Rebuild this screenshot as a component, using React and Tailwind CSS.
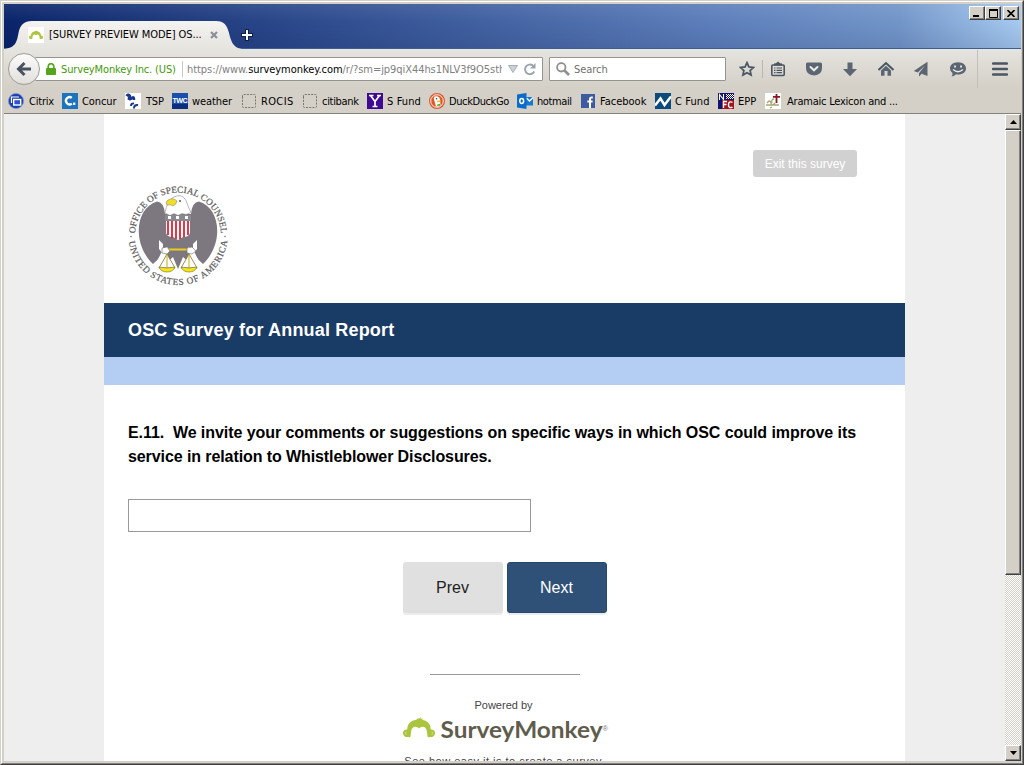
import React from "react";

const bookmarks = [
  { label: "Citrix", icon: "citrix", w: "w-[54px]", gap: "gap-[5px]", ls: "tracking-[-0.2px]" },
  { label: "Concur", icon: "concur", w: "w-[63px]", gap: "gap-[4px]", ls: "tracking-[-0.1px]" },
  { label: "TSP", icon: "tsp", w: "w-[47px]", gap: "gap-[5px]", ls: "tracking-[-0.2px]" },
  { label: "weather", icon: "twc", w: "w-[69px]", gap: "gap-[4px]", ls: "tracking-[-0.1px]" },
  { label: "ROCIS", icon: "blank", w: "w-[61px]", gap: "gap-[4px]", ls: "tracking-[0.35px]" },
  { label: "citibank", icon: "blank", w: "w-[65px]", gap: "gap-[4px]", ls: "tracking-[-0.3px]" },
  { label: "S Fund", icon: "yahoo", w: "w-[62px]", gap: "gap-[4px]", ls: "tracking-[0.1px]" },
  { label: "DuckDuckGo", icon: "duck", w: "w-[88px]", gap: "gap-[4px]", ls: "tracking-[-0.4px]" },
  { label: "hotmail", icon: "outlook", w: "w-[63px]", gap: "gap-[4px]", ls: "tracking-[-0.4px]" },
  { label: "Facebook", icon: "facebook", w: "w-[75px]", gap: "gap-[4px]", ls: "tracking-[0px]" },
  { label: "C Fund", icon: "chart", w: "w-[63px]", gap: "gap-[4px]", ls: "tracking-[0.1px]" },
  { label: "EPP", icon: "nfc", w: "w-[47px]", gap: "gap-[4px]", ls: "tracking-[0px]" },
  { label: "Aramaic Lexicon and ...", icon: "cross", w: "w-[140px]", gap: "gap-[6px]", ls: "tracking-[-0.22px]" },
];

const favicons = {
  citrix: (
    <>
      <circle cx="8" cy="8" r="7.6" fill="#1d3fae" stroke="#7d97dc" strokeWidth=".8" />
      <path d="M3.500 10V4H11" fill="none" stroke="#fff" strokeWidth="1.200" />
      <rect x="5.700" y="6.500" width="7" height="5.500" fill="#2d53c4" stroke="#fff" strokeWidth="1.400" />
    </>
  ),
  concur: (
    <>
      <rect width="16" height="16" fill="#1c74bc" />
      <path d="M9.800 4.900A3.600 3.600 0 1 0 9.800 10.600" fill="none" stroke="#fff" strokeWidth="2.300" />
      <rect x="11" y="9.600" width="2.300" height="2.300" fill="#fff" />
    </>
  ),
  tsp: (
    <>
      <rect width="16" height="16" fill="#fff" />
      <path d="M1.500 3Q3 1 4.500 2.500T3 5M3 5Q5 7 7 5T9 7" fill="none" stroke="#17388c" strokeWidth="2.600" />
      <path d="M6 13q0-3 3-2.500M9 15.500q0-4 4-3.500" fill="none" stroke="#17388c" strokeWidth="2" />
    </>
  ),
  twc: (
    <>
      <rect width="16" height="16" fill="#1b4fae" />
      <rect y="11" width="16" height="5" fill="#0c2f7c" />
      <text x="0.400" y="10" fontSize="7.200" fontWeight="700" fill="#fff" textLength="15.200" fontFamily="Liberation Sans, sans-serif">TWC</text>
    </>
  ),
  blank: <path d="M1.500 4V2.500q0-1 1-1h11q1 0 1 1v11q0 1-1 1h-11q-1 0-1-1z" fill="none" stroke="#77756f" strokeDasharray="2 1.200" />,
  yahoo: (
    <>
      <rect width="16" height="16" fill="#3d0a91" />
      <path d="M3.500 2.500l4.500 6v5M12.500 2.500L8 8.500M2 2.500h4.500M10 2.500h4M5.500 13.500h5" fill="none" stroke="#fff" strokeWidth="1.700" />
    </>
  ),
  duck: (
    <>
      <circle cx="8" cy="8" r="8" fill="#dc5a2c" />
      <circle cx="8" cy="8" r="6.300" fill="none" stroke="#fff" strokeWidth=".9" />
      <path d="M5.500 3.500q4.500-1 5.500 3l.5 6q-2 1.800-4.500.8L5 6.500Q4.500 4.500 5.500 3.500z" fill="#fff" />
      <circle cx="7.600" cy="5.800" r=".7" fill="#234" />
      <path d="M8 7.800l4-.6-1 1.800-3 .3z" fill="#f6c01c" />
      <path d="M8 11.500l3-.8v2.300l-3-.2z" fill="#5cb13c" />
    </>
  ),
  outlook: (
    <>
      <rect x="8" y="4" width="8" height="8.500" fill="#1479d2" />
      <path d="M9.500 5l3 3L16 4.500" fill="none" stroke="#fff" strokeWidth="1.300" />
      <path d="M0 1.500L9.500 0v16L0 14.500z" fill="#0a6cc8" />
      <ellipse cx="4.700" cy="8" rx="1.900" ry="2.500" fill="none" stroke="#fff" strokeWidth="1.500" />
    </>
  ),
  facebook: (
    <>
      <rect x="1" y="1" width="14" height="14" fill="#3f5ba0" />
      <path d="M12.800 4.500h-1.500q-1.300 0-1.300 1.500v9M7.300 8.500h5.300" fill="none" stroke="#fff" strokeWidth="2" />
    </>
  ),
  chart: (
    <>
      <rect width="16" height="16" fill="#0c4a7e" />
      <path d="M0 12.500l5.500-7 4 6.500L16 3.500" fill="none" stroke="#fff" strokeWidth="2.500" />
    </>
  ),
  nfc: (
    <>
      <rect width="16" height="16" fill="#12126e" />
      <rect x="4" y="7" width="12" height="9" fill="#a01420" />
      <path d="M8 1.500h7M9 2.500h7M8 3.500h7M9 4.500h7M8 5.500h7" stroke="#fff" strokeDasharray="1 1" />
      <path d="M1.500 7V1.500l4 5V1" fill="none" stroke="#fff" strokeWidth="1.100" />
      <path d="M5.500 15V8.500h3.500M5.500 11.500h3M14.500 9.300q-4-1.500-4 2.500t4 2.300" fill="none" stroke="#fff" strokeWidth="1.400" />
    </>
  ),
  cross: (
    <>
      <rect width="16" height="16" fill="#fff" />
      <path d="M2 10q3-4 4 0t4 0M1 12h13M7 14l-2 1M9 6q-3 0-2 4" fill="none" stroke="#a9a878" strokeWidth="1.300" />
      <path d="M11.500 1v9M8 3.800h7" stroke="#8c1622" strokeWidth="1.800" />
    </>
  ),
};

const Favicon = ({ name }) => (
  <svg className="block size-4 shrink-0" viewBox="0 0 16 16">{favicons[name]}</svg>
);

const Monkey = ({ className }) => (
  <svg className={className} viewBox="0 0 32 22">
    <path d="M4.200 12.500C4.500 6.500 8 3.500 13 3L15 1.200l1 .6L17.500 0v1.800L20 1.500 19 3c5 .5 8.500 3.500 8.800 9.500a3.800 3.800 0 1 1-1 7.300c-.5 1-2 .9-2.300-.5L24 15c-.5-3.500-2-5.200-4.300-5.200-1.700 0-2.700.7-3.700 1.700-1-1-2-1.700-3.700-1.700C10 9.800 8.500 11.500 8 15l-.5 4.300c-.3 1.400-1.800 1.500-2.300.5a3.800 3.800 0 1 1-1-7.300z" fill="#aac43b" />
    <path d="M3.200 14.700q-1.500 1.500 0 3M28.800 14.700q1.500 1.500 0 3" fill="none" stroke="#d8e4a0" strokeWidth=".9" />
  </svg>
);

const Tool = ({ children }) => (
  <svg className="block size-4 shrink-0" viewBox="0 0 16 16" fill="none" stroke="#4a5663" strokeWidth="1.800">{children}</svg>
);

const ClassicButton = ({ className, children }) => (
  <div className={"flex shrink-0 items-center justify-center border border-t-white border-l-white border-r-[#404040] border-b-[#404040] bg-[#d4d0c8] shadow-[inset_-1px_-1px_0_#808080] " + className}>{children}</div>
);

function TitleBar() {
  return (
    <div className="flex h-[45px] items-start justify-between border-b border-[#3a5f96] bg-[linear-gradient(180deg,#ffffff14,#ffffff00_40%,#00003018),linear-gradient(90deg,#0a246a,#5d7fbb_70%,#7295c8_88%,#a6caf0)]">
      <div className="relative mt-[17px] h-7 w-[238px]">
        <svg className="absolute inset-0 block h-7 w-[238px]" viewBox="0 0 238 28">
          <defs>
            <linearGradient id="tab" x2="0" y2="1"><stop stopColor="#f4f3f1" /><stop offset="1" stopColor="#e6e4df" /></linearGradient>
          </defs>
          <path d="M0 28C12 27 13 20 14.500 12 16 4 20 0 28 0H212C220 0 223 4 225 12 227 20 229 27 238 28z" fill="url(#tab)" />
        </svg>
        <div className="relative flex h-7 items-center pl-6">
          <div className="flex size-4 items-center justify-center bg-white"><Monkey className="block h-[10px] w-[14px]" /></div>
          <span className="ml-[5px] mt-px w-[154px] whitespace-nowrap text-[11px] tracking-[-0.07px] text-black">[SURVEY PREVIEW MODE] OS...</span>
          <svg className="ml-[7px] block size-2" viewBox="0 0 8 8"><path d="M1 1l6 6M7 1L1 7" stroke="#8a8f96" strokeWidth="2.200" /></svg>
        </div>
      </div>
      <svg className="-ml-px mt-[25px] block size-3" viewBox="0 0 12 12"><path d="M6 0v12M0 6h12" stroke="#0d2144" strokeWidth="4" /><path d="M6 1v10M1 6h10" stroke="#fff" strokeWidth="2" /></svg>
      <div className="ml-auto mr-[2px] mt-[2px] flex">
        <ClassicButton className="h-[14px] w-4"><svg className="block h-2 w-2" viewBox="0 0 8 8"><path d="M0 7h6" stroke="#000" strokeWidth="2" /></svg></ClassicButton>
        <ClassicButton className="h-[14px] w-4"><svg className="block h-[9px] w-[9px]" viewBox="0 0 9 9"><path d="M.5 0v8.500h8V0M0 1h9" fill="none" stroke="#000" /><path d="M0 1h9" stroke="#000" strokeWidth="2" /></svg></ClassicButton>
        <ClassicButton className="ml-[2px] h-[14px] w-4"><svg className="block h-[7px] w-2" viewBox="0 0 8 7"><path d="M.5 0l7 7M7.500 0l-7 7" stroke="#000" strokeWidth="1.600" /></svg></ClassicButton>
      </div>
    </div>
  );
}

function NavBar() {
  return (
    <div className="flex h-10 items-center pl-1">
      <div className="z-10 flex size-8 shrink-0 items-center justify-center rounded-full border border-[#9c9b98] bg-[linear-gradient(#fbfbfa,#e2e0dc)]">
        <svg className="block size-4" viewBox="0 0 16 16"><path d="M15 8H3M8.500 2L2.500 8l6 6" fill="none" stroke="#47525e" strokeWidth="3" /></svg>
      </div>
      <div className="-ml-[5px] flex h-6 w-[508px] shrink-0 items-center rounded-[1px] border border-[#96948f] bg-white pl-[10px] text-[11px]">
        <svg className="block h-3 w-[10px]" viewBox="0 0 10 12"><path d="M2.200 6V3.500a2.800 2.800 0 0 1 5.600 0V6" fill="none" stroke="#55a51c" strokeWidth="1.700" /><rect y="5" width="10" height="7" rx="1" fill="#55a51c" /></svg>
        <span className="ml-[5px] mt-[2px] w-[121px] whitespace-nowrap tracking-[-0.14px] text-[#429a05]">SurveyMonkey Inc. (US)</span>
        <span className="h-4 w-px bg-[#c9c8c0]" />
        <span className="ml-[4px] mt-[2px] w-[315px] overflow-hidden whitespace-nowrap tracking-[-0.06px] text-[#808080]">https://www.<span className="text-black">surveymonkey.com</span>/r/?sm=jp9qiX44hs1NLV3f9O5sth</span>
        <svg className="ml-[6px] block h-2 w-[10px]" viewBox="0 0 10 8"><path d="M.5 .5h9L5 7.500z" fill="#ccd2d8" stroke="#a6aeb6" /></svg>
        <svg className="ml-[6px] block size-3" viewBox="0 0 12 12"><path d="M10.200 8.500A4.800 4.800 0 1 1 9 2.700" fill="none" stroke="#98a3ad" strokeWidth="1.900" /><path d="M11.500 0v5.500H6z" fill="#98a3ad" /></svg>
      </div>
      <div className="ml-[6px] flex h-6 w-[177px] shrink-0 items-center rounded-[1px] border border-[#96948f] bg-white pl-[6px] text-[11px] text-[#6f6f6f]">
        <svg className="block size-[14px]" viewBox="0 0 14 14" fill="none" stroke="#8f8f8f"><circle cx="5.300" cy="5.300" r="4.200" strokeWidth="1.800" /><path d="M8.500 8.500l4.500 4.500" strokeWidth="2.600" /></svg>
        <span className="ml-[4px] mt-[2px] tracking-[-0.05px]">Search</span>
      </div>
      <div className="ml-[13px] flex items-center">
        <Tool><path d="M8 1.600l1.900 4.300 4.700.5-3.500 3.100 1 4.600L8 11.700l-4.100 2.400 1-4.600L1.400 6.400l4.700-.5z" strokeWidth="1.700" /></Tool>
        <span className="ml-[7px] mr-[7px] h-[18px] w-px bg-[#b8b6b0]" />
        <Tool><rect x="1.800" y="4" width="12.400" height="10.500" rx="1" strokeWidth="1.600" /><path d="M8 .5l2 1.700 2 .3v2H4v-2l2-.3z" fill="#4a5663" stroke="none" /><path d="M4 7h1.500M6.500 7H12M4 9.300h1.500M6.500 9.300H12M4 11.600h1.500M6.500 11.600H12" strokeWidth="1.200" /></Tool>
        <div className="ml-5"><Tool><path d="M1.500 1.500h13Q16 1.500 16 3v4q0 7-8 7.500Q0 14 0 7V3q0-1.500 1.500-1.500z" fill="#5b6672" stroke="none" /><path d="M4.500 6L8 9.300 11.500 6" stroke="#eceae6" strokeWidth="2" strokeLinecap="round" /></Tool></div>
        <div className="ml-5"><Tool><path d="M5.500 1.500h5V8H15l-7 7.200L1 8h4.500z" fill="#5b6672" stroke="none" /></Tool></div>
        <div className="ml-5"><Tool><path d="M.5 9L8 2l7.500 7" strokeWidth="2" /><path d="M3 9.500l5-4.700 5 4.700v5.200H9.500V10h-3v4.700H3z" fill="#5b6672" stroke="none" /></Tool></div>
        <div className="ml-[19px]"><Tool><path d="M14.500.8L.8 10l4 1.500L12 4.500 6 12.300v3.200l2.600-2.700L14.500 15z" fill="#5b6672" stroke="none" /></Tool></div>
        <div className="ml-[21px]"><Tool><path d="M8 1.200c5 0 8 2.800 8 6.200s-3 6-8 6q-1 0-2-.2Q4.500 15.300 1.500 15.500 2.800 14 2.500 12 0 10.300 0 7.400C0 4 3 1.200 8 1.200z" fill="#5b6672" stroke="none" /><path d="M5 4.500v2M11 4.500v2" stroke="#eceae6" strokeWidth="1.800" /><path d="M3 8.500q5 4.500 10 0" stroke="#eceae6" strokeWidth="1.300" /></Tool></div>
        <span className="ml-[11px] mr-[14px] h-[38px] w-px bg-[#c2bfb9]" />
        <svg className="block h-[14px] w-4" viewBox="0 0 16 14"><path d="M1 1.500h14M1 7h14M1 12.500h14" stroke="#4a5663" strokeWidth="2.400" strokeLinecap="round" /></svg>
      </div>
    </div>
  );
}

function Seal() {
  return (
    <svg className="block h-[104px] w-[102px] overflow-visible" viewBox="0 0 102 104">
      <defs>
        <path id="arcTop" d="M8 51.500A43 43 0 0 1 94 51.500" />
        <path id="arcBottom" d="M1.500 51.500A49.500 49.500 0 0 0 100.500 51.500" />
      </defs>
      <g fontFamily="Liberation Serif, serif" fontSize="9.200" fill="#5a5a5a" stroke="#5a5a5a" strokeWidth=".2">
        <text><textPath href="#arcTop" startOffset="2" textLength="131">OFFICE OF SPECIAL COUNSEL</textPath></text>
        <text><textPath href="#arcBottom" startOffset="6" textLength="144">UNITED STATES OF AMERICA</textPath></text>
      </g>
      <path d="M38 30Q37 18 30 17.500C8 24 5 60 26 80q5-4 8-9l5-8h24l5 8q3 5 8 9c21-20 18-56-4-62.500q-7 .5-8 12.500z" fill="#7d787f" />
      <path d="M38 29Q40 17 46 13.500q9-5 13 3 2 6 5 12l-5 2-4-1-4 2-4-2-4 2z" fill="#fff" stroke="#888" strokeWidth=".6" />
      <path d="M50 17q-4-4-9-1-3 2-1 5 4-1 6 1 3-1 4-5z" fill="#f1df26" stroke="#777" strokeWidth=".5" />
      <circle cx="53" cy="17" r=".9" fill="#444" />
      <path d="M39 37h24v12q-1 4-7 4l-5 3-5-3q-6 0-7-4z" fill="#fff" />
      <path d="M41 37v14M45 37v17M49 37v18M53 37v18M57 37v16M61 37v14" stroke="#e02336" strokeWidth="1.800" />
      <path d="M38 31h26v6H38z" fill="#8b8990" />
      <path d="M41 32h3v3h-3zM49 32h3v3h-3zM58 32h3v3h-3z" fill="#fff" />
      <path d="M42 58h18l5 23-9-8-5 12-5-12-9 8z" fill="#7d787f" />
      <path d="M28 82l7-15 4 8-5 12zM74 82l-7-15-4 8 5 12z" fill="#fff" />
      <path d="M32 56l4 4v4l4 2-4 4-4-5zM70 56l-4 4v4l-4 2 4 4 4-5z" fill="#fff" />
      <path d="M36 65.500h30" stroke="#eccc1c" strokeWidth="2" />
      <path d="M35 64l5-1 3 4-3 3-5-1zM60 64l5-1 4 4-4 3-5-1z" fill="#fff" stroke="#666" strokeWidth=".6" />
      <path d="M40 70l-8 14h16zM62 70l-8 14h16z" fill="#fff" stroke="#847028" strokeWidth=".8" />
      <path d="M32 83q8 2 16 0-2 5-8 5t-8-5zM54 83q8 2 16 0-2 5-8 5t-8-5z" fill="#f5e51b" stroke="#756b22" strokeWidth=".6" />
      <path d="M40 70v13M62 70v13" stroke="#c8a91a" />
      <circle cx="4" cy="52.500" r=".8" fill="#777" /><circle cx="98" cy="52.500" r=".8" fill="#777" />
    </svg>
  );
}

function SurveyPage() {
  return (
    <main className="ml-[100px] flex h-[647px] w-[801px] shrink-0 flex-col overflow-hidden bg-white font-['Liberation_Sans',Arial,sans-serif]">
      <div className="mr-12 mt-9 flex h-[27px] w-[104px] shrink-0 items-center justify-center self-end rounded-[3px] bg-[#d1d1d1] text-[12px] text-white"><span className="whitespace-nowrap">Exit this survey</span></div>
      <div className="ml-[23px] mt-[7px] h-[119px] shrink-0"><Seal /></div>
      <h1 className="flex h-[54px] shrink-0 items-center bg-[#193c67] pl-6 text-[18px] font-bold text-white"><span className="whitespace-nowrap tracking-[0.18px]">OSC Survey for Annual Report</span></h1>
      <div className="h-7 shrink-0 bg-[#b4cdf3]" />
      <h2 className="ml-6 mt-9 shrink-0 whitespace-nowrap text-[16px] font-bold leading-6 text-black">
        <span className="block w-fit tracking-[-0.065px]">E.11.&nbsp; We invite your comments or suggestions on specific ways in which OSC could improve its</span>
        <span className="block w-fit tracking-[-0.09px]">service in relation to Whistleblower Disclosures.</span>
      </h2>
      <div className="ml-6 mt-[30px] h-[33px] w-[403px] shrink-0 border border-[#999]" />
      <div className="mt-[30px] flex h-[51px] shrink-0 justify-center gap-1 text-[16px]">
        <div className="flex w-[100px] items-center justify-center rounded-[3px] bg-[#e0e0e0] text-[#222] shadow-[0_2px_0_#ececec]">Prev</div>
        <div className="flex w-[100px] items-center justify-center rounded-[3px] border border-[#26476f] bg-[#2f5177] text-white shadow-[0_2px_0_#ececec]">Next</div>
      </div>
      <div className="ml-[326px] mt-[61px] h-px w-[150px] shrink-0 bg-[#999]" />
      <div className="mt-[22px] flex h-4 shrink-0 items-center justify-center pr-[2px] text-[11px] text-[#444]">
        <span>Powered by</span>
      </div>
      <div className="ml-[299px] mt-[4px] flex h-7 shrink-0 items-start">
        <Monkey className="block h-[22px] w-8" />
        <svg className="ml-[6px] block h-7 w-[168px] overflow-visible" viewBox="0 0 168 28">
          <text x="-0.500" y="21" fontFamily="Lato, sans-serif" fontSize="22.500" fontWeight="700" fill="#5e5d4c" textLength="162" lengthAdjust="spacingAndGlyphs">SurveyMonkey</text>
          <text x="161.500" y="14" fontFamily="Liberation Sans, sans-serif" fontSize="7.500" fill="#777">®</text>
        </svg>
      </div>
      <div className="mt-[8px] shrink-0 whitespace-nowrap text-center text-[11px] leading-4 text-[#444]"><span className="tracking-[0.5px]">See how easy it is to create a survey.</span></div>
    </main>
  );
}

function ScrollBar() {
  return (
    <div className="ml-auto flex w-4 shrink-0 flex-col bg-[repeating-conic-gradient(#ffffff_0_25%,#d4d0c8_0_50%)] bg-size-[2px_2px]">
      <ClassicButton className="h-4 w-4"><svg className="block h-1 w-[7px]" viewBox="0 0 7 4"><path d="M0 4l3.500-4L7 4z" fill="#000" /></svg></ClassicButton>
      <ClassicButton className="h-[445px] w-4" />
      <ClassicButton className="mt-auto h-4 w-4"><svg className="block h-1 w-[7px]" viewBox="0 0 7 4"><path d="M0 0h7L3.500 4z" fill="#000" /></svg></ClassicButton>
    </div>
  );
}

export default function App() {
  return (
    <div className="h-[765px] w-[1024px] overflow-hidden border border-b-[#404040] border-l-[#d4d0c8] border-r-[#404040] border-t-[#d4d0c8] bg-[#d4d0c8] font-['DejaVu_Sans_Condensed','DejaVu_Sans',sans-serif]">
      <div className="h-full border border-b-[#808080] border-l-white border-r-[#808080] border-t-white">
        <div className="flex h-full flex-col pb-[2px] pl-[2px] pr-px pt-[2px]">
          <TitleBar />
          <div className="h-[65px] shrink-0 border-b border-[#85827c] bg-[linear-gradient(#e6e4df,#d4d0c8_38px)]">
            <NavBar />
            <div className="flex h-6 items-center pl-1 text-[11px] text-black">
              {bookmarks.map((b) => (
                <div key={b.label} className={"flex shrink-0 items-center whitespace-nowrap " + b.w + " " + b.gap + " " + b.ls}>
                  <Favicon name={b.icon} />
                  <span className="mt-[2px]">{b.label}</span>
                </div>
              ))}
            </div>
          </div>
          <div className="flex h-[647px] bg-[#eee]">
            <SurveyPage />
            <ScrollBar />
          </div>
        </div>
      </div>
    </div>
  );
}
